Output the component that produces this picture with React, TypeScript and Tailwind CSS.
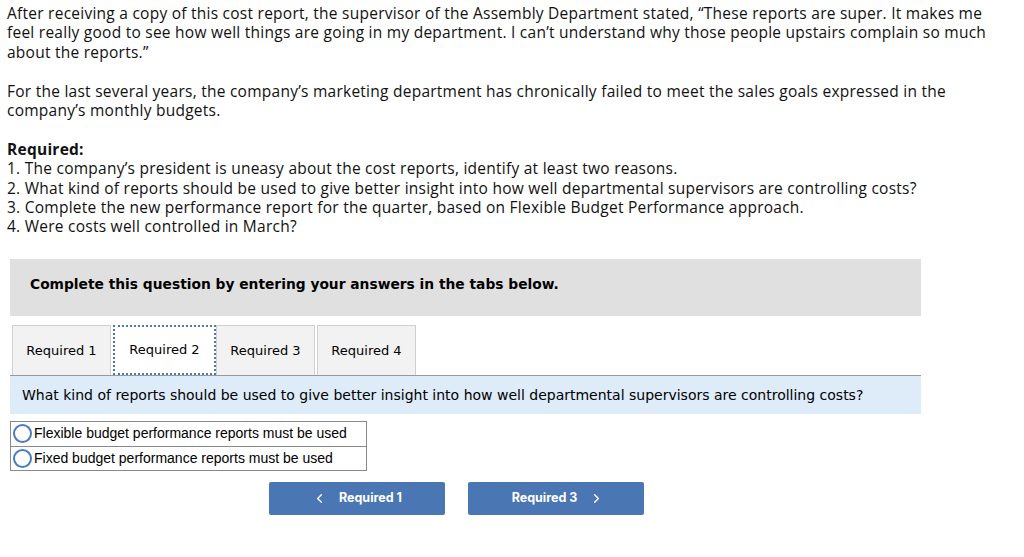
import { ChevronLeft, ChevronRight } from "lucide-react";

const intro = [
  "After receiving a copy of this cost report, the supervisor of the Assembly Department stated, \u201cThese reports are super. It makes me",
  "feel really good to see how well things are going in my department. I can\u2019t understand why those people upstairs complain so much",
  "about the reports.\u201d",
];

const para2 = [
  "For the last several years, the company\u2019s marketing department has chronically failed to meet the sales goals expressed in the",
  "company\u2019s monthly budgets.",
];

const required = [
  "1. The company\u2019s president is uneasy about the cost reports, identify at least two reasons.",
  "2. What kind of reports should be used to give better insight into how well departmental supervisors are controlling costs?",
  "3. Complete the new performance report for the quarter, based on Flexible Budget Performance approach.",
  "4. Were costs well controlled in March?",
];

const tabs = ["Required 1", "Required 2", "Required 3", "Required 4"];

const options = [
  "Flexible budget performance reports must be used",
  "Fixed budget performance reports must be used",
];

export default function App() {
  return (
    <div className="min-h-screen bg-white text-[#111]">
      {/* question text */}
      <div className="px-[7px] pt-[4px] text-[15.5px] tracking-[0.25px] leading-[19.4px] font-['Open_Sans',sans-serif] whitespace-nowrap">
        {intro.map((l) => (
          <div key={l}>{l}</div>
        ))}
        <div className="h-[19.4px]" />
        {para2.map((l) => (
          <div key={l}>{l}</div>
        ))}
        <div className="h-[19.4px]" />
        <div className="font-bold">Required:</div>
        {required.map((l) => (
          <div key={l}>{l}</div>
        ))}
      </div>

      {/* instructions box */}
      <div className="ml-[10px] mt-[22px] w-[911px] h-[57px] bg-[#e0e0e0] pl-[20px] pt-[15px] font-['DejaVu_Sans',Verdana,sans-serif] text-[13.8px] font-bold text-black">
        Complete this question by entering your answers in the tabs below.
      </div>

      {/* tabs */}
      <div className="ml-[10px] mt-[9px] w-[911px] border-b border-[#999] flex pl-[2px] font-['DejaVu_Sans',Verdana,sans-serif] text-[13px] text-black">
        {tabs.map((t, i) =>
          i === 1 ? (
            <div
              key={t}
              className="h-[50px] w-[103px] bg-white border-2 border-dotted border-[#4a77b4] -mb-px flex items-center justify-center"
            >
              {t}
            </div>
          ) : (
            <div
              key={t}
              className="h-[50px] w-[99px] mr-[2px] bg-[#f2f2f2] border border-b-0 border-[#d0d0d0] flex items-center justify-center"
            >
              {t}
            </div>
          )
        )}
      </div>

      {/* question band */}
      <div className="ml-[10px] w-[911px] h-[38px] bg-[#deebf8] pl-[12px] pt-[1px] flex items-center font-['DejaVu_Sans',Verdana,sans-serif] text-[14px] text-black">
        What kind of reports should be used to give better insight into how well departmental supervisors are controlling costs?
      </div>

      {/* options */}
      <div className="ml-[10px] mt-[7px] w-[357px] border border-[#8a8a8a] font-['Liberation_Sans',Arial,sans-serif] text-[14px] text-black">
        {options.map((o, i) => (
          <label
            key={o}
            className={`h-[24px] flex items-center gap-[2px] pl-[2px] ${i > 0 ? "border-t border-[#8a8a8a]" : ""}`}
          >
            <span className="w-[19px] h-[19px] rounded-full border-2 border-[#4a7cc0] bg-white shrink-0" />
            {o}
          </label>
        ))}
      </div>

      {/* nav buttons */}
      <div className="ml-[269px] mt-[11px] flex gap-[23px] font-['Inter',sans-serif] text-[12.5px] font-bold text-white">
        <button className="w-[176px] h-[33px] rounded-[2px] bg-[#4a76b3] flex items-center justify-center gap-[12px]">
          <ChevronLeft size={15} strokeWidth={2.2} />
          <span>Required 1</span>
        </button>
        <button className="w-[176px] h-[33px] rounded-[2px] bg-[#4a76b3] flex items-center justify-center gap-[12px] pl-[4px]">
          <span>Required 3</span>
          <ChevronRight size={15} strokeWidth={2.2} />
        </button>
      </div>
    </div>
  );
}
